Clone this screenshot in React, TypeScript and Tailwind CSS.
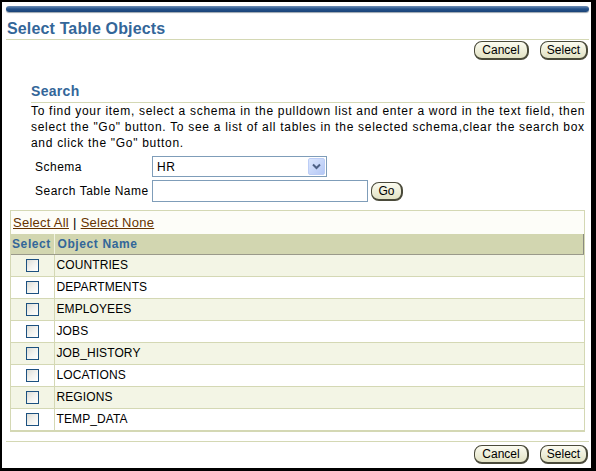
const rows = [
  "COUNTRIES",
  "DEPARTMENTS",
  "EMPLOYEES",
  "JOBS",
  "JOB_HISTORY",
  "LOCATIONS",
  "REGIONS",
  "TEMP_DATA",
];

function PillButton({ label, width }: { label: string; width: string }) {
  return (
    <button
      className={`${width} h-[19px] rounded-[8px] border border-[#4a4a3a] border-r-2 border-b-2 bg-gradient-to-b from-[#fbfbf0] to-[#e2e2c4] text-[12px] leading-none text-black flex items-center justify-center`}
    >
      {label}
    </button>
  );
}

function Checkbox() {
  return (
    <span className="block w-[13px] h-[13px] border border-[#1c5180] bg-gradient-to-br from-[#dcdcd6] via-[#f2f2ee] to-white" />
  );
}

function ButtonBar() {
  return (
    <div className="flex justify-end gap-[11px] pr-[1px]">
      <PillButton label="Cancel" width="w-[55px]" />
      <PillButton label="Select" width="w-[48px]" />
    </div>
  );
}

export default function App() {
  return (
    <div className="w-[596px] h-[471px] bg-black pt-[2px] pl-[2px] pr-[5px] pb-[3px] font-['Liberation_Sans',Arial,sans-serif] text-[12px] text-black">
      <div className="h-full bg-white pl-[4px] pr-[2px] flex flex-col">
        {/* header bar */}
        <div className="mt-[4px] h-[6px] rounded-full bg-gradient-to-b from-[#6f8fb5] via-[#23518a] to-[#1b4478] shadow-[0_1px_1px_#9aa3ad]" />

        <div className="pt-[7px] border-b border-[#d4d8b4]">
          <h1 className="text-[16px] leading-[20px] font-bold text-[#336699] pl-[1px] tracking-[0.15px]">
            Select Table Objects
          </h1>
        </div>

        <div className="mt-[1px]">
          <ButtonBar />
        </div>

        {/* search region */}
        <div className="ml-[25px] mr-[4px] mt-[23px]">
          <h2 className="text-[14px] leading-[17px] font-bold text-[#336699] pb-[2px] border-b border-[#d4d8b4] tracking-[0.3px]">
            Search
          </h2>
          <p className="leading-[16px] tracking-[0.7px] whitespace-nowrap">
            To find your item, select a schema in the pulldown list and enter a word in the text field, then
            <br />
            select the "Go" button. To see a list of all tables in the selected schema,clear the search box
            <br />
            and click the "Go" button.
          </p>

          <div className="mt-[5px] flex items-center tracking-[0.5px]">
            <span className="w-[121px] pl-[4px]">Schema</span>
            <div className="w-[175px] h-[21px] border border-[#7f9db9] bg-white flex items-center justify-between pl-[4px] pr-[1px]">
              <span>HR</span>
              <span className="w-[17px] h-[17px] rounded-[2px] bg-gradient-to-br from-[#dbe6fd] to-[#b5c8f5] border border-[#bccdf6] flex items-center justify-center">
                <svg width="9" height="7" viewBox="0 0 9 7">
                  <path d="M1 1.5 L4.5 5 L8 1.5" fill="none" stroke="#4d6185" strokeWidth="2" />
                </svg>
              </span>
            </div>
          </div>

          <div className="mt-[3px] flex items-center tracking-[0.5px]">
            <span className="w-[121px] pl-[4px] whitespace-nowrap">Search Table Name</span>
            <div className="w-[216px] h-[22px] border border-[#7f9db9] bg-white" />
            <div className="ml-[3px] tracking-normal">
              <PillButton label="Go" width="w-[32px]" />
            </div>
          </div>
        </div>

        {/* results table */}
        <div className="ml-[4px] mr-[4px] mt-[8px] border border-[#d4d8b4] bg-[#fdfdf8]">
          <div className="h-[23px] flex items-center pl-[2px] pt-[1px] text-[13px] tracking-[0.25px]">
            <a className="text-[#663300] underline">Select All</a>
            <span className="mx-[4px]">|</span>
            <a className="text-[#663300] underline">Select None</a>
          </div>
          <table className="w-full border-collapse">
            <thead>
              <tr className="h-[20px] bg-[#d2d6b0] text-[#336699] font-bold tracking-[0.6px]">
                <th className="w-[43px] text-left pl-[1px] border-r border-[#f0f2e0] border-b border-b-[#9a9a8a]">Select</th>
                <th className="text-left pl-[3px] border-b border-b-[#9a9a8a] border-r border-r-[#8a8a80]">Object Name</th>
              </tr>
            </thead>
            <tbody>
              {rows.map((name, i) => (
                <tr key={name} className={`h-[22px] ${i % 2 === 0 ? "bg-[#f3f5e5]" : "bg-white"}`}>
                  <td className="border-r border-b border-[#d4d8b4]">
                    <div className="flex justify-center">
                      <Checkbox />
                    </div>
                  </td>
                  <td className="border-b border-[#d4d8b4] pl-[2px] tracking-[0.1px]">{name}</td>
                </tr>
              ))}
            </tbody>
          </table>
        </div>

        <div className="mt-[9px] border-t border-[#d4d8b4] pt-[3px]">
          <ButtonBar />
        </div>
      </div>
    </div>
  );
}
